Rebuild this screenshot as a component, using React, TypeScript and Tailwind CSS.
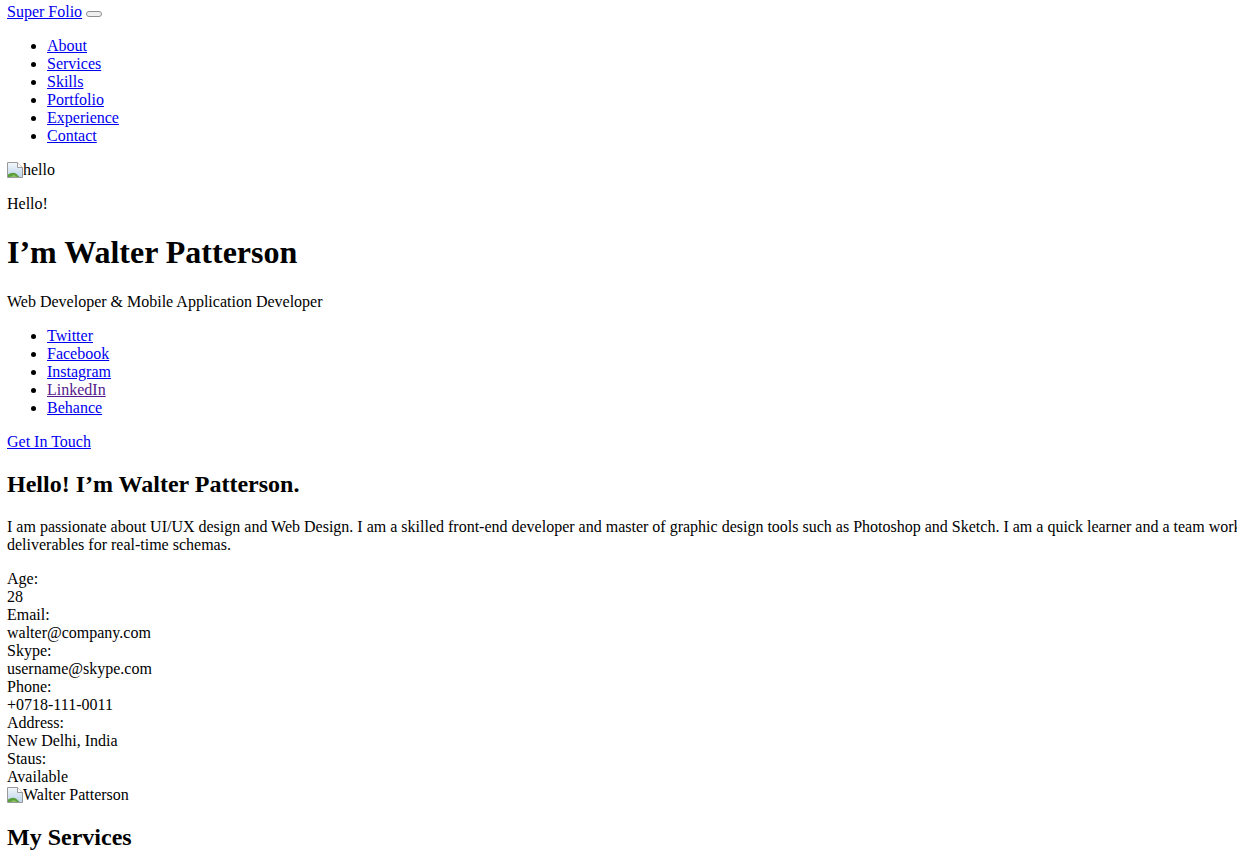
const links = ["About", "Services", "Skills", "Portfolio", "Experience", "Contact"];
const socials = ["Twitter", "Facebook", "Instagram", "LinkedIn", "Behance"];
const info: [string, string][] = [
  ["Age:", "28"],
  ["Email:", "walter@company.com"],
  ["Skype:", "username@skype.com"],
  ["Phone:", "+0718-111-0011"],
  ["Address:", "New Delhi, India"],
  ["Staus:", "Available"],
];

function BrokenImage({ alt }: { alt: string }) {
  return (
    <span>
      <svg width="16" height="16" viewBox="0 0 16 16" className="inline-block align-[-3px]">
        <defs>
          <linearGradient id="sky" x1="0" y1="0" x2="0" y2="1">
            <stop offset="0" stopColor="#f4f8fc" />
            <stop offset="1" stopColor="#b9d3ea" />
          </linearGradient>
        </defs>
        <path d="M0.5 0.5H10.5L15.5 5.5V15.5H0.5Z" fill="url(#sky)" stroke="#9a9a9a" />
        <path d="M1 15L1 12.5Q5 9.5 9 11.5L12.5 15Z" fill="#5a9e3a" />
        <path d="M3 15L7 12.8L10 15Z" fill="#8cc063" />
        <path d="M10.5 0.5V5.5H15.5" fill="#ffffff" stroke="#9a9a9a" />
      </svg>
      {alt}
    </span>
  );
}

export default function App() {
  return (
    <div className="w-full overflow-hidden bg-white pl-[7px] pr-2 pt-[3px] text-[16px] leading-[normal] text-black font-['Liberation_Serif',_'Times_New_Roman',_serif]">
      <nav>
        <div>
          <a href="#" className="text-[#0000ee] underline">
            Super Folio
          </a>{" "}
          <button className="inline-block h-[6px] w-4 rounded-[3px] border border-[#8f8f8f] bg-[#efefef] align-[1px]"></button>
        </div>
        <ul className="my-4 list-disc pl-10">
          {links.map((l) => (
            <li key={l}>
              <a href="#" className="text-[#0000ee] underline">
                {l}
              </a>
            </li>
          ))}
        </ul>
      </nav>

      <section>
        <div>
          <BrokenImage alt="hello" />
        </div>
        <p className="my-4">Hello!</p>
        <h1 className="my-[21.44px] text-[32px] font-bold">I’m Walter Patterson</h1>
        <p className="my-4">Web Developer &amp; Mobile Application Developer</p>
        <ul className="my-4 list-disc pl-10">
          {socials.map((s) => (
            <li key={s}>
              <a
                href="#"
                className={s === "LinkedIn" ? "text-[#551a8b] underline" : "text-[#0000ee] underline"}
              >
                {s}
              </a>
            </li>
          ))}
        </ul>
        <div>
          <a href="#" className="text-[#0000ee] underline">
            Get In Touch
          </a>
        </div>
      </section>

      <section>
        <h2 className="my-[19.92px] text-[24px] font-bold">Hello! I’m Walter Patterson.</h2>
        <p className="my-4">
          <span className="whitespace-nowrap">
            I am passionate about UI/UX design and Web Design. I am a skilled front-end developer and master of
            graphic design tools such as Photoshop and Sketch. I am a quick learner and a team worker that gets the
            job done. I can easily take ownership of a project and make sure it is delivered with high-quality
          </span>
          <br />
          deliverables for real-time schemas.
        </p>
        <div>
          {info.map(([k, v]) => (
            <div key={k}>
              <div>{k}</div>
              <div>{v}</div>
            </div>
          ))}
        </div>
        <div>
          <BrokenImage alt="Walter Patterson" />
        </div>
      </section>

      <section>
        <h2 className="my-[19.92px] text-[24px] font-bold">My Services</h2>
      </section>
    </div>
  );
}
